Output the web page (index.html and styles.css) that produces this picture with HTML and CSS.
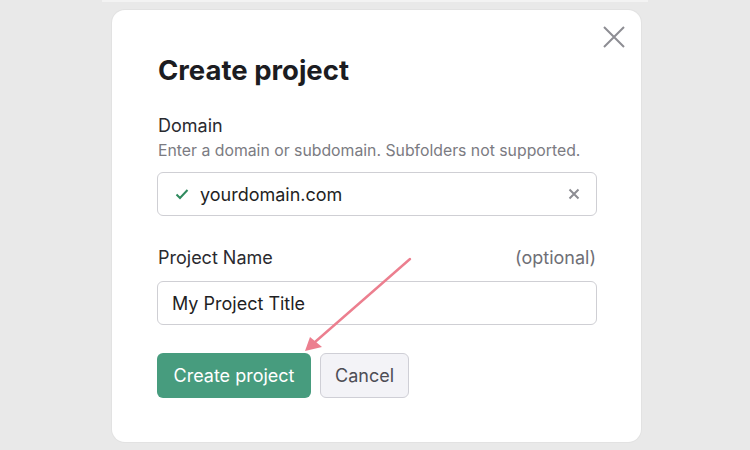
FILE: index.html
```html
<!DOCTYPE html>
<html lang="en">
<head>
<meta charset="utf-8">
<title>Create project</title>
<link rel="stylesheet" href="styles.css">
</head>
<body>
<div class="topstrip"></div>
<div class="modal">
  <button class="close" aria-label="Close">
    <svg width="24" height="24" viewBox="0 0 24 24"><path d="M2 2 L22 22 M22 2 L2 22" stroke="#8d8d93" stroke-width="2" fill="none"/></svg>
  </button>
  <h1 class="title">Create project</h1>
  <div class="field">
    <div class="label">Domain</div>
    <div class="hint">Enter a domain or subdomain. Subfolders not supported.</div>
    <div class="input input-domain">
      <svg class="check" width="14" height="12" viewBox="0 0 14 12"><path d="M1.5 6.5 L5 10 L12.5 2" stroke="#2f8a5e" stroke-width="2" fill="none"/></svg>
      <span class="value">yourdomain.com</span>
      <svg class="clear" width="12" height="12" viewBox="0 0 12 12"><path d="M1.5 1.5 L10.5 10.5 M10.5 1.5 L1.5 10.5" stroke="#8d8d93" stroke-width="2" fill="none"/></svg>
    </div>
  </div>
  <div class="field field-name">
    <div class="label-row">
      <span class="label">Project Name</span>
      <span class="optional">(optional)</span>
    </div>
    <div class="input input-name"><span class="value">My Project Title</span></div>
  </div>
  <div class="actions">
    <button class="btn btn-primary">Create project</button>
    <button class="btn btn-secondary">Cancel</button>
  </div>
  <svg class="arrow" width="120" height="110" viewBox="0 0 120 110">
    <path d="M108 5 L13 88" stroke="#ec7f8f" stroke-width="2.4" fill="none" stroke-linecap="round"/>
    <path d="M3 97 L8 83 L20 93 Z" fill="#ec7f8f"/>
  </svg>
</div>
</body>
</html>
```
FILE: styles.css
```css
* { box-sizing: border-box; }
html, body { margin: 0; padding: 0; }
body {
  background: #e9e9e9;
  font-family: Inter, "Noto Sans", "Liberation Sans", sans-serif;
  width: 750px;
  height: 450px;
  overflow: hidden;
}
.topstrip {
  height: 2px;
  margin: 0 102px 0 102px;
  background: #f3f3f3;
}
.modal {
  position: relative;
  margin: 8px 0 0 112px;
  width: 529px;
  height: 432px;
  background: #ffffff;
  border-radius: 13px;
  box-shadow: 0 0 0 1px #e2e2e2;
  padding: 43px 44px 0 45px;
}
.close {
  position: absolute;
  top: 14px;
  right: 14px;
  width: 26px;
  height: 26px;
  padding: 1px;
  border: 0;
  background: transparent;
}
.title {
  margin: 0 0 0 1px;
  font-size: 27.5px;
  line-height: 34px;
  font-weight: 700;
  color: #1c1c21;
}
.field { margin-top: 28px; }
.label {
  font-size: 18px;
  line-height: 22px;
  color: #2a2a2f;
  padding-left: 1px;
}
.hint {
  margin-top: 4px;
  font-size: 15.8px;
  line-height: 20px;
  color: #7b7b82;
  padding-left: 1px;
}
.input {
  display: flex;
  align-items: center;
  height: 44px;
  border: 1px solid #cfcfd4;
  border-radius: 6px;
  font-size: 18px;
  color: #1f1f24;
}
.input-domain { margin-top: 11px; padding: 0 16px 0 17px; }
.check { margin-right: 11px; }
.input-domain .value { flex: 1; }
.field-name { margin-top: 31px; }
.label-row {
  display: flex;
  justify-content: space-between;
  align-items: baseline;
  padding-right: 1px;
}
.optional { font-size: 18px; line-height: 22px; color: #6f6f76; }
.input-name { margin-top: 12px; padding: 0 14px; }
.actions {
  display: flex;
  gap: 9px;
  margin-top: 28px;
}
.btn {
  height: 45px;
  border-radius: 6px;
  font-family: inherit;
  font-size: 18px;
  padding: 0;
}
.btn-primary {
  background: #479c7e;
  color: #ffffff;
  border: 0;
  width: 154px;
}
.btn-secondary {
  background: #f3f3f7;
  color: #4d4d55;
  border: 1px solid #cfcfd6;
  width: 89px;
}
.arrow {
  position: absolute;
  left: 190px;
  top: 244px;
}
```
